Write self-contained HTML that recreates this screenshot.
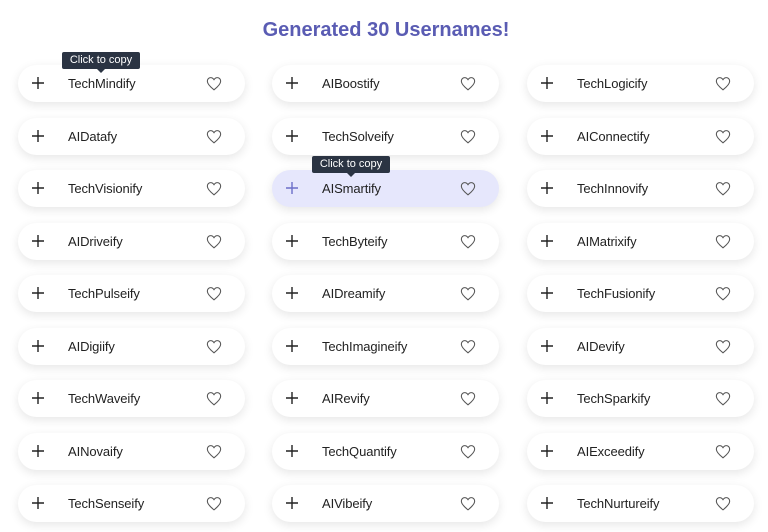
<!DOCTYPE html>
<html><head><style>
body{margin:0;width:768px;height:532px;background:#fff;font-family:"Liberation Sans",sans-serif;position:relative;overflow:hidden}
h1{position:absolute;top:19px;left:0;width:772px;text-align:center;margin:0;font-size:20px;font-weight:bold;color:#5a5cb3}
.c{position:absolute;width:227px;height:37px;border-radius:19px;background:#fff;box-shadow:0 3px 10px rgba(0,0,0,0.1);}
.c.h{background:#e6e7fc}
.p{position:absolute;left:14px;top:12px}
.n{position:absolute;left:50px;top:11px;font-size:13px;color:#222;letter-spacing:-0.1px}
.hv{position:absolute;left:188px;top:11px}
.t{position:absolute;width:78px;height:17px;background:#2b3443;color:#fff;font-size:11px;line-height:17px;text-align:center;border-radius:2px}
.t:after{content:"";position:absolute;left:35px;bottom:-4px;border:4px solid transparent;border-top-color:#2b3443;border-bottom:0}
</style></head><body>
<h1>Generated 30 Usernames!</h1>
<div id="g"></div>
<script>
var n=[["TechMindify","AIBoostify","TechLogicify"],["AIDatafy","TechSolveify","AIConnectify"],["TechVisionify","AISmartify","TechInnovify"],["AIDriveify","TechByteify","AIMatrixify"],["TechPulseify","AIDreamify","TechFusionify"],["AIDigiify","TechImagineify","AIDevify"],["TechWaveify","AIRevify","TechSparkify"],["AINovaify","TechQuantify","AIExceedify"],["TechSenseify","AIVibeify","TechNurtureify"]];
var xs=[18,272,527],h="";
var heart='<svg width="16" height="15" viewBox="0 0 24 22"><path d="M12 20.5C5 15 2 11.5 2 7.5 2 4.5 4.3 2.2 7 2.2c2 0 3.6 1 5 3 1.4-2 3-3 5-3 2.7 0 5 2.3 5 5.3 0 4-3 7.5-10 13z" fill="none" stroke="#555" stroke-width="1.6"/></svg>';
for(var r=0;r<9;r++)for(var c=0;c<3;c++){
var y=65+r*52.5;var hi=(r==2&&c==1);
var col=hi?'#6c6fc8':'#222';
h+='<div class="c'+(hi?' h':'')+'" style="left:'+xs[c]+'px;top:'+y+'px"><svg class="p" width="12" height="12"><path d="M6 0V12M0 6H12" stroke="'+col+'" stroke-width="1.4"/></svg><span class="n">'+n[r][c]+'</span><span class="hv">'+heart+'</span></div>';}
h+='<div class="t" style="left:62px;top:52px">Click to copy</div><div class="t" style="left:312px;top:156px">Click to copy</div>';
document.getElementById("g").innerHTML=h;
</script>
</body></html>
